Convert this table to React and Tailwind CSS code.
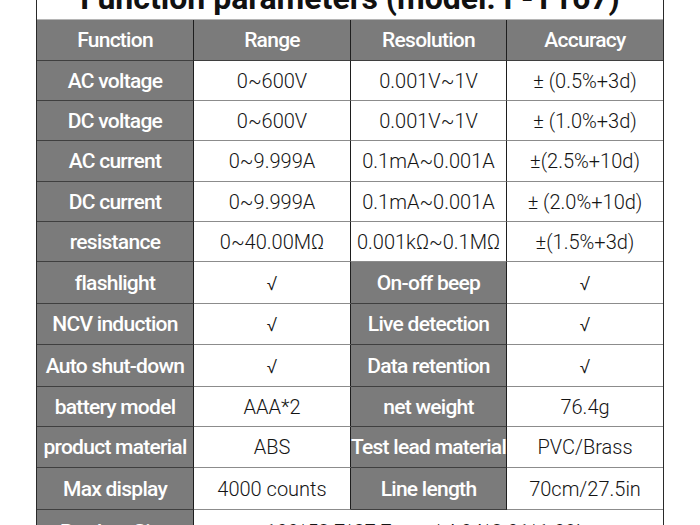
const specRows = [
    ["AC voltage", "0~600V", "0.001V~1V", "± (0.5%+3d)"],
    ["DC voltage", "0~600V", "0.001V~1V", "± (1.0%+3d)"],
    ["AC current", "0~9.999A", "0.1mA~0.001A", "±(2.5%+10d)"],
    ["DC current", "0~9.999A", "0.1mA~0.001A", "± (2.0%+10d)"],
    ["resistance", "0~40.00MΩ", "0.001kΩ~0.1MΩ", "±(1.5%+3d)"],
];

const pairRows = [
    ["flashlight", "√", "On-off beep", "√"],
    ["NCV induction", "√", "Live detection", "√"],
    ["Auto shut-down", "√", "Data retention", "√"],
    ["battery model", "AAA*2", "net weight", "76.4g"],
    ["product material", "ABS", "Test lead material", "PVC/Brass"],
    ["Max display", "4000 counts", "Line length", "70cm/27.5in"],
];

const labelFont = { fontFamily: "Roboto, 'Noto Sans', sans-serif" };

function Label({ children, last }) {
    return (
        <div
            style={labelFont}
            className={`flex items-center justify-center pt-[2px] bg-[#7b7b7b] text-white text-[21px] font-medium tracking-[-0.035em] whitespace-nowrap border-b border-b-[#3f3f3f] ${last ? "" : "border-r border-r-[#1e1e1e]"}`}
        >
            {children}
        </div>
    );
}

function Value({ children, last }) {
    return (
        <div
            style={labelFont}
            className={`flex items-center justify-center bg-white text-[#141414] text-[20px] font-light whitespace-nowrap border-b border-b-[#8c8c8c] ${last ? "" : "border-r border-r-[#1e1e1e]"}`}
        >
            {children}
        </div>
    );
}

export default function App() {
    return (
        <div className="w-[700px] h-[525px] overflow-hidden bg-white">
            <div className="ml-[36px] w-[628px] border-x border-[#2a2a2a]">
                {/* Title, only its lower part shows */}
                <div className="h-[20px] overflow-hidden flex items-end justify-center border-b border-[#b5b5b5]">
                    <span
                        style={labelFont}
                        className="mb-[5px] text-[32px] leading-none font-bold text-[#111] whitespace-nowrap"
                    >
                        Function parameters (model: F-T167)
                    </span>
                </div>

                <div className="grid grid-cols-[157px_157px_156px_156px] grid-rows-[41px_40px_40px_41px_40px_40px_42px_41px_42px_40px_41px_42px_44px]">
                    <Label>Function</Label>
                    <Label>Range</Label>
                    <Label>Resolution</Label>
                    <Label last>Accuracy</Label>

                    {specRows.map((r) => (
                        <>
                            <Label key={r[0]}>{r[0]}</Label>
                            <Value>{r[1]}</Value>
                            <Value>{r[2]}</Value>
                            <Value last>{r[3]}</Value>
                        </>
                    ))}

                    {pairRows.map((r) => (
                        <>
                            <Label key={r[0]}>{r[0]}</Label>
                            <Value>{r[1]}</Value>
                            <Label>{r[2]}</Label>
                            <Value last>{r[3]}</Value>
                        </>
                    ))}

                    <Label>Product Size</Label>
                    <div
                        style={labelFont}
                        className="col-span-3 flex items-center justify-center bg-white text-[#141414] text-[20px] font-light whitespace-nowrap"
                    >
                        100*52.7*27.7mm / 4.04*2.01*1.09in
                    </div>
                </div>
            </div>
        </div>
    );
}
